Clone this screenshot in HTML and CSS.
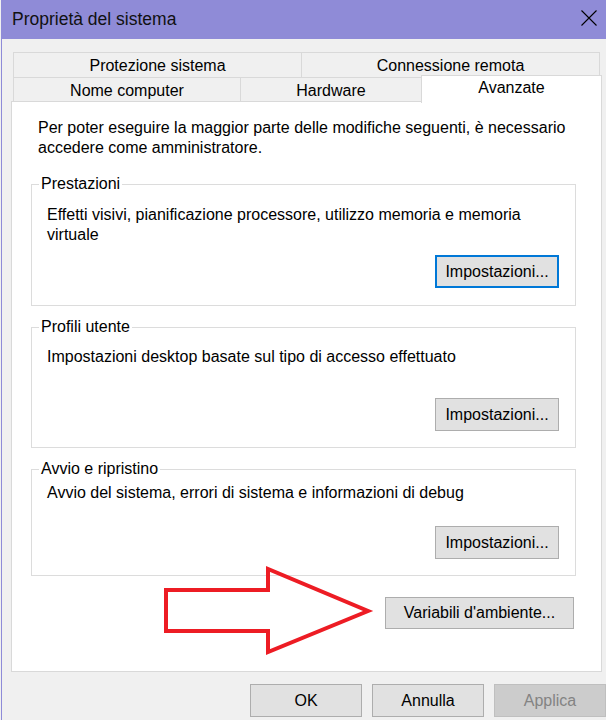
FILE: index.html
```html
<!DOCTYPE html>
<html lang="it">
<head>
<meta charset="utf-8">
<title>Proprietà del sistema</title>
<link rel="stylesheet" href="styles.css">
</head>
<body>
<div class="window">
  <div class="titlebar">
    <span class="title">Proprietà del sistema</span>
    <svg class="close" viewBox="0 0 16 16" width="16" height="16" aria-label="Chiudi">
      <path d="M0.5 0.5 L15.5 15.5 M15.5 0.5 L0.5 15.5" stroke="#000" stroke-width="1.1" fill="none"/>
    </svg>
  </div>
  <div class="content">
    <div class="tabs">
      <div class="tab-row row1">
        <div class="tab tab-protezione">Protezione sistema</div>
        <div class="tab tab-connessione">Connessione remota</div>
      </div>
      <div class="tab-row row2">
        <div class="tab tab-nome">Nome computer</div>
        <div class="tab tab-hardware">Hardware</div>
        <div class="tab tab-avanzate">Avanzate</div>
      </div>
    </div>
    <div class="panel">
      <p class="intro">Per poter eseguire la maggior parte delle modifiche seguenti, è necessario accedere come amministratore.</p>

      <fieldset class="group group-1">
        <legend>Prestazioni</legend>
        <div class="group-body">
          <div class="group-text narrow">Effetti visivi, pianificazione processore, utilizzo memoria e memoria virtuale</div>
          <div class="btn-row"><button class="btn btn-settings btn-focus">Impostazioni...</button></div>
        </div>
      </fieldset>

      <fieldset class="group group-2">
        <legend>Profili utente</legend>
        <div class="group-body">
          <div class="group-text">Impostazioni desktop basate sul tipo di accesso effettuato</div>
          <div class="btn-row"><button class="btn btn-settings">Impostazioni...</button></div>
        </div>
      </fieldset>

      <fieldset class="group group-3">
        <legend>Avvio e ripristino</legend>
        <div class="group-body">
          <div class="group-text">Avvio del sistema, errori di sistema e informazioni di debug</div>
          <div class="btn-row"><button class="btn btn-settings">Impostazioni...</button></div>
        </div>
      </fieldset>

      <div class="env-row"><button class="btn btn-env">Variabili d'ambiente...</button></div>
    </div>
    <div class="actions">
      <button class="btn btn-action">OK</button>
      <button class="btn btn-action">Annulla</button>
      <button class="btn btn-action btn-disabled">Applica</button>
    </div>
  </div>
  <svg class="arrow" viewBox="0 0 604 720" width="604" height="720" aria-hidden="true">
    <polygon points="164,590 266,590 266,569 366,611 266,652 266,631 164,631" fill="none" stroke="#ed1c24" stroke-width="4" stroke-linejoin="miter" stroke-miterlimit="10"/>
  </svg>
</div>
</body>
</html>
```
FILE: styles.css
```css
* { box-sizing: border-box; }
html, body { margin: 0; padding: 0; }
body {
  background: #f0f0f0;
  font-family: "Liberation Sans", Arial, sans-serif;
  font-size: 16px;
  color: #000;
  overflow: hidden;
}
.window {
  position: relative;
  width: 605px;
  height: 720px;
  margin-left: 1px;
  border-left: 1px solid #8e8bd8;
  background: #f0f0f0;
}
.titlebar {
  height: 39px;
  background: #8f8bd7;
  display: flex;
  align-items: center;
  padding-left: 10px;
}
.title {
  font-size: 17.5px;
  color: #111;
}
.close {
  margin-left: auto;
  margin-right: 9px;
  align-self: flex-start;
  margin-top: 10px;
}
.content { padding: 13px 0 0 9px; }
.tabs { margin-left: 2px; }
.tab-row { display: flex; }
.tab {
  border: 1px solid #d9d9d9;
  border-bottom: none;
  display: flex;
  align-items: center;
  justify-content: center;
  line-height: 18px;
  padding-top: 2px;
  background: #f0f0f0;
}
.tab + .tab { margin-left: -1px; }
.row1 .tab { height: 25px; }
.row2 { height: 24px; }
.row2 .tab { height: 24px; }
.tab-protezione { width: 289px; }
.tab-connessione { width: 299px; }
.tab-nome { width: 228px; }
.tab-hardware { width: 182px; }
.row2 .tab-avanzate {
  width: 181px;
  height: 28px;
  margin-top: -2px;
  background: #fff;
  position: relative;
  z-index: 1;
  align-items: flex-start;
  padding-top: 3px;
}
.panel {
  width: 591px;
  height: 571px;
  background: #fff;
  border: 1px solid #d9d9d9;
  padding: 16px 25px 0 19px;
}
.intro {
  margin: 0 0 17px 7px;
  line-height: 20px;
  max-width: 530px;
}
.group {
  margin: 0;
  padding: 0;
  border: 1px solid #dcdcdc;
  min-width: 0;
}
.group legend {
  margin-left: 7px;
  padding: 0 2px;
  line-height: 18px;
}
.group-body {
  padding: 12px 16px 17px 15px;
  display: flex;
  flex-direction: column;
}
.group-text { line-height: 20px; }
.group-text.narrow { max-width: 490px; }
.btn-row {
  display: flex;
  justify-content: flex-end;
  margin-top: 10px;
}
.group-2, .group-3 { margin-top: 12px; }
.group-2 .group-body { padding-top: 11px; padding-bottom: 16px; }
.group-2 .btn-row { margin-top: 31px; }
.group-3 .group-body { padding-top: 5px; padding-bottom: 16px; }
.group-3 .btn-row { margin-top: 23px; }
.btn {
  font-family: "Liberation Sans", Arial, sans-serif;
  font-size: 16px;
  color: #000;
  background: #e1e1e1;
  border: 1px solid #adadad;
  border-radius: 0;
  height: 33px;
  padding: 0;
  margin: 0;
}
.btn-settings { width: 124px; }
.btn-focus { border: 2px solid #0078d7; }
.env-row {
  display: flex;
  justify-content: flex-end;
  margin-top: 21px;
  padding-right: 2px;
}
.btn-env { width: 189px; height: 32px; }
.actions {
  display: flex;
  gap: 10px;
  margin-top: 12px;
  padding-left: 239px;
}
.btn-action { width: 112px; flex: none; }
.btn-disabled {
  background: #cccccc;
  border-color: #bfbfbf;
  color: #838383;
}
.arrow {
  position: absolute;
  left: 0;
  top: 0;
  pointer-events: none;
}
```
